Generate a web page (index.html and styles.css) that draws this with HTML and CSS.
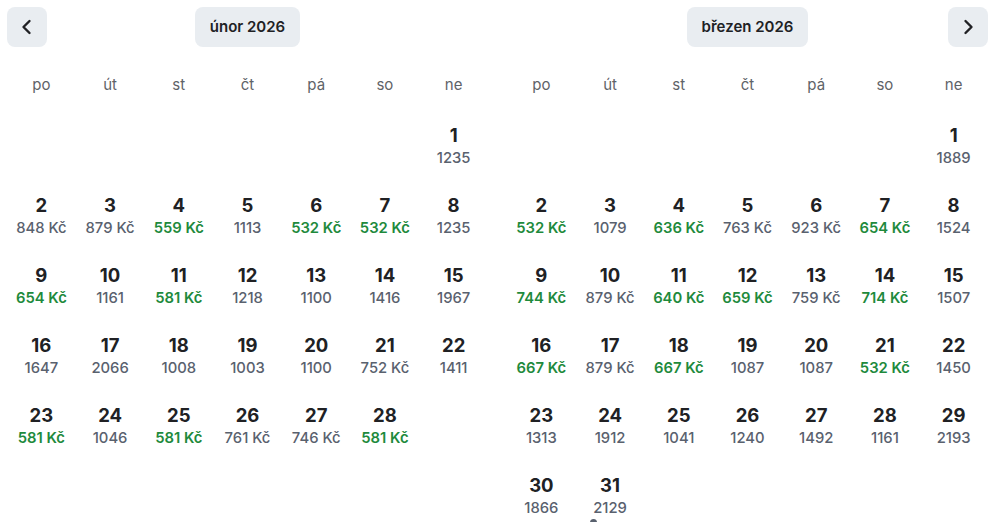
FILE: index.html
```html
<!DOCTYPE html>
<html lang="cs">
<head>
<meta charset="utf-8">
<link rel="stylesheet" href="styles.css">
</head>
<body>
<div class="cal">
  <section class="month">
    <div class="head">
      <button class="nav" aria-label="předchozí"><svg width="14" height="16" viewBox="0 0 14 16"><path d="M9.5 2 L3.5 8 L9.5 14" fill="none" stroke="#202124" stroke-width="2.4" stroke-linecap="round" stroke-linejoin="round"/></svg></button>
      <div class="title">únor 2026</div>
      <span></span>
    </div>
    <div class="week"><span>po</span><span>út</span><span>st</span><span>čt</span><span>pá</span><span>so</span><span>ne</span></div>
    <div class="days">
      <div class="day start7"><b>1</b><i>1235</i></div>
      <div class="day"><b>2</b><i>848 Kč</i></div>
      <div class="day"><b>3</b><i>879 Kč</i></div>
      <div class="day"><b>4</b><i class="low">559 Kč</i></div>
      <div class="day"><b>5</b><i>1113</i></div>
      <div class="day"><b>6</b><i class="low">532 Kč</i></div>
      <div class="day"><b>7</b><i class="low">532 Kč</i></div>
      <div class="day"><b>8</b><i>1235</i></div>
      <div class="day"><b>9</b><i class="low">654 Kč</i></div>
      <div class="day"><b>10</b><i>1161</i></div>
      <div class="day"><b>11</b><i class="low">581 Kč</i></div>
      <div class="day"><b>12</b><i>1218</i></div>
      <div class="day"><b>13</b><i>1100</i></div>
      <div class="day"><b>14</b><i>1416</i></div>
      <div class="day"><b>15</b><i>1967</i></div>
      <div class="day"><b>16</b><i>1647</i></div>
      <div class="day"><b>17</b><i>2066</i></div>
      <div class="day"><b>18</b><i>1008</i></div>
      <div class="day"><b>19</b><i>1003</i></div>
      <div class="day"><b>20</b><i>1100</i></div>
      <div class="day"><b>21</b><i>752 Kč</i></div>
      <div class="day"><b>22</b><i>1411</i></div>
      <div class="day"><b>23</b><i class="low">581 Kč</i></div>
      <div class="day"><b>24</b><i>1046</i></div>
      <div class="day"><b>25</b><i class="low">581 Kč</i></div>
      <div class="day"><b>26</b><i>761 Kč</i></div>
      <div class="day"><b>27</b><i>746 Kč</i></div>
      <div class="day"><b>28</b><i class="low">581 Kč</i></div>
    </div>
  </section>
  <section class="month">
    <div class="head">
      <span></span>
      <div class="title">březen 2026</div>
      <button class="nav" aria-label="další"><svg width="14" height="16" viewBox="0 0 14 16"><path d="M4.5 2 L10.5 8 L4.5 14" fill="none" stroke="#202124" stroke-width="2.4" stroke-linecap="round" stroke-linejoin="round"/></svg></button>
    </div>
    <div class="week"><span>po</span><span>út</span><span>st</span><span>čt</span><span>pá</span><span>so</span><span>ne</span></div>
    <div class="days">
      <div class="day start7"><b>1</b><i>1889</i></div>
      <div class="day"><b>2</b><i class="low">532 Kč</i></div>
      <div class="day"><b>3</b><i>1079</i></div>
      <div class="day"><b>4</b><i class="low">636 Kč</i></div>
      <div class="day"><b>5</b><i>763 Kč</i></div>
      <div class="day"><b>6</b><i>923 Kč</i></div>
      <div class="day"><b>7</b><i class="low">654 Kč</i></div>
      <div class="day"><b>8</b><i>1524</i></div>
      <div class="day"><b>9</b><i class="low">744 Kč</i></div>
      <div class="day"><b>10</b><i>879 Kč</i></div>
      <div class="day"><b>11</b><i class="low">640 Kč</i></div>
      <div class="day"><b>12</b><i class="low">659 Kč</i></div>
      <div class="day"><b>13</b><i>759 Kč</i></div>
      <div class="day"><b>14</b><i class="low">714 Kč</i></div>
      <div class="day"><b>15</b><i>1507</i></div>
      <div class="day"><b>16</b><i class="low">667 Kč</i></div>
      <div class="day"><b>17</b><i>879 Kč</i></div>
      <div class="day"><b>18</b><i class="low">667 Kč</i></div>
      <div class="day"><b>19</b><i>1087</i></div>
      <div class="day"><b>20</b><i>1087</i></div>
      <div class="day"><b>21</b><i class="low">532 Kč</i></div>
      <div class="day"><b>22</b><i>1450</i></div>
      <div class="day"><b>23</b><i>1313</i></div>
      <div class="day"><b>24</b><i>1912</i></div>
      <div class="day"><b>25</b><i>1041</i></div>
      <div class="day"><b>26</b><i>1240</i></div>
      <div class="day"><b>27</b><i>1492</i></div>
      <div class="day"><b>28</b><i>1161</i></div>
      <div class="day"><b>29</b><i>2193</i></div>
      <div class="day"><b>30</b><i>1866</i></div>
      <div class="day marked"><b>31</b><i>2129</i></div>
    </div>
  </section>
</div>
</body>
</html>
```
FILE: styles.css
```css
html, body {
  margin: 0;
  padding: 0;
  background: #ffffff;
  overflow: hidden;
}
body {
  font-family: Inter, "Noto Sans", sans-serif;
  color: #202124;
}
.cal {
  display: flex;
  gap: 19px;
  padding: 7px 10px 0 7px;
}
.month {
  width: 481px;
  flex: none;
}
.head {
  display: grid;
  grid-template-columns: 40px 1fr 40px;
  align-items: center;
  height: 40px;
}
.nav {
  width: 40px;
  height: 40px;
  border: 0;
  border-radius: 8px;
  background: #e9edf1;
  padding: 0;
  display: flex;
  align-items: center;
  justify-content: center;
}
.title {
  justify-self: center;
  height: 40px;
  line-height: 40px;
  padding: 0 15px;
  border-radius: 8px;
  background: #e9edf1;
  font-size: 15px;
  font-weight: 600;
  color: #202124;
}
.week {
  display: grid;
  grid-template-columns: repeat(7, 1fr);
  margin-top: 28px;
  height: 20px;
  line-height: 20px;
  font-size: 15px;
  color: #5f6368;
  text-align: center;
}
.days {
  display: grid;
  grid-template-columns: repeat(7, 1fr);
  grid-auto-rows: 70px;
  margin-top: 28px;
}
.day {
  display: flex;
  flex-direction: column;
  align-items: center;
  position: relative;
}
.start7 {
  grid-column-start: 7;
}
.day b {
  font-size: 18.5px;
  font-weight: 700;
  line-height: 24px;
  color: #202124;
}
.day i {
  font-style: normal;
  font-size: 14.8px;
  font-weight: 500;
  line-height: 22px;
  color: #59616e;
}
.day i.low {
  color: #1e8a3c;
  font-weight: 600;
}
.marked::after {
  content: "";
  position: absolute;
  left: 14px;
  top: 46px;
  width: 7px;
  height: 7px;
  border-radius: 50%;
  background: #59616e;
}
```
